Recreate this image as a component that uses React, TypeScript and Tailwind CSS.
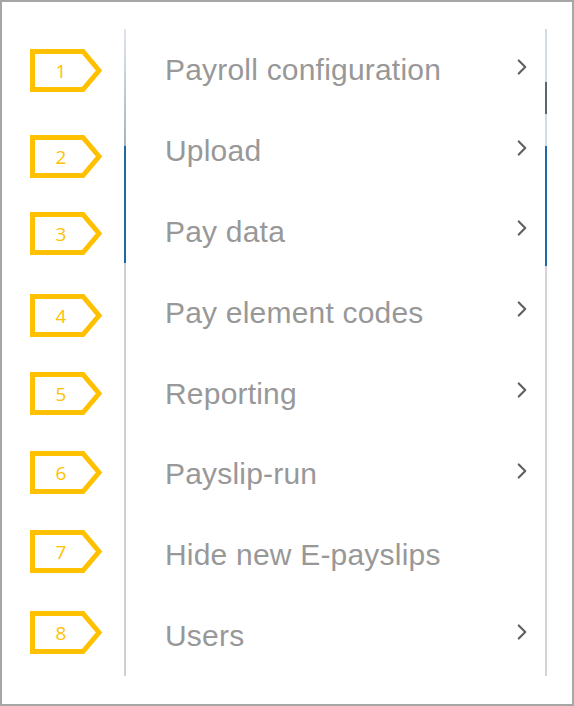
import { ChevronRight } from 'lucide-react';

const items = [
    { label: 'Payroll configuration', arrow: true },
    { label: 'Upload', arrow: true },
    { label: 'Pay data', arrow: true },
    { label: 'Pay element codes', arrow: true },
    { label: 'Reporting', arrow: true },
    { label: 'Payslip-run', arrow: true },
    { label: 'Hide new E-payslips', arrow: false },
    { label: 'Users', arrow: true },
];

// gaps above each callout, taken from the screenshot
const callouts = [
    { n: 1, mt: 'mt-[47px]' },
    { n: 2, mt: 'mt-[43px]' },
    { n: 3, mt: 'mt-[34px]' },
    { n: 4, mt: 'mt-[39px]' },
    { n: 5, mt: 'mt-[35px]' },
    { n: 6, mt: 'mt-[36px]' },
    { n: 7, mt: 'mt-[36px]' },
    { n: 8, mt: 'mt-[38px]' },
];

function Callout({ n }: { n: number }) {
    return (
        <svg width="73" height="43" viewBox="0 0 73 43" className="block">
            <polygon
                points="2.5,2.5 53,2.5 69,21.5 53,40.5 2.5,40.5"
                fill="white"
                stroke="#FFC000"
                strokeWidth="5"
            />
            <text
                x="31"
                y="29"
                textAnchor="middle"
                fill="#FFC000"
                fontSize="19"
                fontFamily="'Open Sans', 'Liberation Sans', sans-serif"
            >
                {n}
            </text>
        </svg>
    );
}

export default function App() {
    return (
        <div className="w-[574px] h-[706px] border-2 border-[#a6a6a6] bg-white flex font-['Liberation_Sans',Arial,sans-serif]">
            <div className="w-[122px] pl-[28px] flex flex-col">
                {callouts.map((c) => (
                    <div key={c.n} className={c.mt}>
                        <Callout n={c.n} />
                    </div>
                ))}
            </div>

            <div className="mt-[27px] h-[647px] w-[424px] flex">
                {/* left rail */}
                <div className="w-[2px] flex flex-col">
                    <div className="h-[117px] bg-gradient-to-b from-[#dfe5ea] to-[#aab3ba]" />
                    <div className="h-[117px] bg-[#1f69a3]" />
                    <div className="flex-1 bg-[#cfcfd4]" />
                </div>

                <div className="flex-1 pt-[1px] pl-[39px] pr-[10px]">
                    {items.map((item) => (
                        <div key={item.label} className="h-[80.8px] flex items-center justify-between">
                            <span className="text-[30px] leading-none text-[#989898] tracking-[0.2px]">{item.label}</span>
                            {item.arrow && (
                                <ChevronRight className="w-[26px] h-[26px] mb-[7px] text-[#606060]" strokeWidth={2} />
                            )}
                        </div>
                    ))}
                </div>

                {/* right scroll rail */}
                <div className="w-[2px] mr-[1px] flex flex-col">
                    <div className="h-[53px] bg-[#d3dae0]" />
                    <div className="h-[32px] bg-[#5b6770]" />
                    <div className="h-[32px] bg-[#d3dae0]" />
                    <div className="h-[120px] bg-[#1f6aa6]" />
                    <div className="flex-1 bg-[#d4d4d8]" />
                </div>
            </div>
        </div>
    );
}
